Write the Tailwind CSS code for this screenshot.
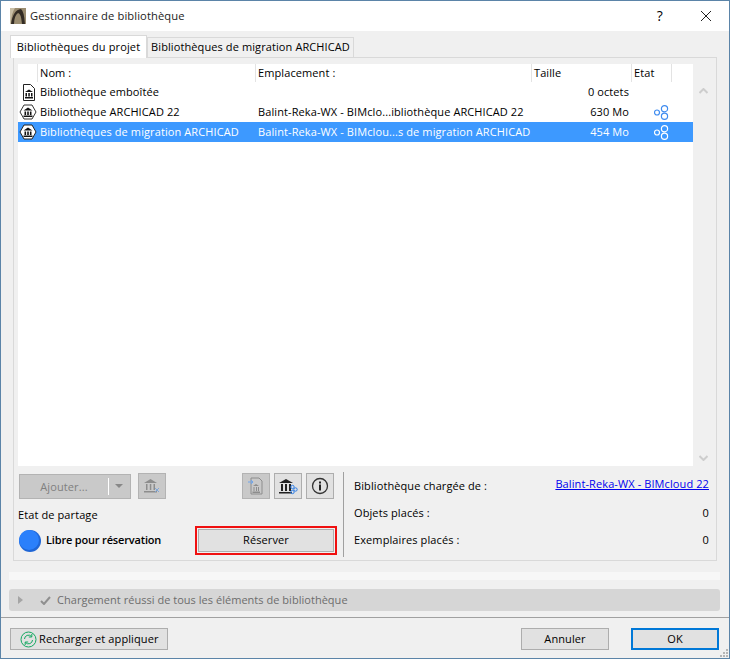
<!DOCTYPE html>
<html lang="fr">
  <head>
    <meta charset="UTF-8" />
    <title>Gestionnaire de bibliothèque</title>
    <script src="https://cdn.jsdelivr.net/npm/@tailwindcss/browser@4"></script>
  </head>
  <body class="m-0">
    <div class="w-[730px] h-[659px] flex flex-col border border-[#5b84a8] bg-[#f0f0f0] font-['Open_Sans',sans-serif] text-[11px] tracking-[.1px] text-black overflow-hidden relative">
      <!-- title bar -->
      <div class="h-[30px] bg-white flex items-center shrink-0 pl-[9px]">
        <svg width="16" height="16" viewBox="0 0 16 16"><rect width="16" height="16" fill="#9a8c70"/><path d="M0 0h5Q1 6 1 16H0z" fill="#c9bfa6"/><path d="M1 16Q3 2 11 1Q14 3 15 16L12 16Q11 5 8 5Q4 8 4 16Z" fill="#332c24"/></svg>
        <span class="ml-[4px] text-[11.2px] text-[#222]">Gestionnaire de bibliothèque</span>
        <span class="ml-auto text-[14px] mr-[38px] -mt-[2px]">?</span>
        <svg class="mr-[18px]" width="10" height="10" viewBox="0 0 10 10"><path d="M0 0l10 10M10 0 0 10" stroke="#222" fill="none"/></svg>
      </div>
      <!-- tabs -->
      <div class="h-[22px] flex items-end shrink-0 pl-[9px] mt-[4px]">
        <div class="h-[23px] w-[137px] bg-white border border-b-0 border-[#d9d9d9] flex items-center justify-center tracking-[.13px] whitespace-nowrap relative -mb-px z-10">Bibliothèques du projet</div>
        <div class="h-[20px] w-[207px] bg-[#f0f0f0] border border-b-0 border-[#d9d9d9] flex items-center justify-center whitespace-nowrap">Bibliothèques de migration ARCHICAD</div>
      </div>
      <!-- panel -->
      <div class="ml-[12px] w-[704px] h-[504px] border border-[#d9d9d9] bg-[#f0f0f0] shrink-0 flex flex-col pt-[6px] pl-[4px]">
        <div class="h-[402px] flex shrink-0">
          <div class="w-[675px] flex flex-col bg-white">
            <div class="h-[18px] flex bg-white w-[673px] leading-[18px]">
              <div class="w-[20px] h-full border-r border-[#e3e3e3]"></div>
              <div class="w-[218px] h-full border-r border-[#e3e3e3] pl-[2px]">Nom :</div>
              <div class="w-[276px] h-full border-r border-[#e3e3e3] pl-[2px]">Emplacement :</div>
              <div class="w-[100px] h-full border-r border-[#e3e3e3] pl-[2px]">Taille</div>
              <div class="w-[40px] h-full border-r border-[#e3e3e3] pl-[2px]">Etat</div>
            </div>
            <div class="h-[20px] flex items-center whitespace-nowrap">
              <div class="w-[22px] pl-[4px]">
                <svg class="block" width="14" height="17" viewBox="0 0 14 17"><path d="M1.500.5h7l4 4v12h-11z" fill="#fff" stroke="#222"/><path d="M3 8 7 5.500 11 8zM3.500 9h1.500v3.500H3.500zM6.300 9h1.500v3.500H6.300zM9 9h1.500v3.500H9zM3 13h8v1.500H3z" fill="#111"/></svg>
              </div>
              <div class="w-[218px]">Bibliothèque emboîtée</div>
              <div class="w-[276px]"></div>
              <div class="w-[95px] text-right">0 octets</div>
            </div>
            <div class="h-[20px] flex items-center whitespace-nowrap">
              <div class="w-[22px] pl-[1px]">
                <svg class="block" width="18" height="16" viewBox="0 0 18 16"><path d="M1 8 5 1h8l4 7-4 7H5z" fill="#fff" stroke="#333"/><path d="M4.500 6.500 9 3.500l4.500 3zM5.500 7.500h1.600v3.500H5.500zM8.200 7.500h1.600v3.500H8.200zM10.900 7.500h1.600v3.500h-1.600zM4.500 11.500h9V13h-9z" fill="#111"/></svg>
              </div>
              <div class="w-[218px]">Bibliothèque ARCHICAD 22</div>
              <div class="w-[276px]">Balint-Reka-WX - BIMclo...ibliothèque ARCHICAD 22</div>
              <div class="w-[95px] text-right">630 Mo</div>
              <div class="w-[60px] pl-[25px]">
                <svg class="block" width="15" height="15" viewBox="0 0 15 15" fill="none" stroke="#3f8cf0" stroke-width="1.200"><circle cx="3" cy="7.500" r="2.500"/><circle cx="10.500" cy="3.700" r="3.100"/><circle cx="10.500" cy="11.200" r="3.100"/></svg>
              </div>
            </div>
            <div class="h-[20px] flex items-center whitespace-nowrap bg-[#3d99ff] text-white">
              <div class="w-[22px] pl-[1px]">
                <svg class="block" width="18" height="16" viewBox="0 0 18 16"><path d="M1 8 5 1h8l4 7-4 7H5z" fill="#fff" stroke="#222"/><path d="M4.500 6.500 9 3.500l4.500 3zM5.500 7.500h1.600v3.500H5.500zM8.200 7.500h1.600v3.500H8.200zM10.900 7.500h1.600v3.500h-1.600zM4.500 11.500h9V13h-9z" fill="#111"/></svg>
              </div>
              <div class="w-[218px]">Bibliothèques de migration ARCHICAD</div>
              <div class="w-[276px]">Balint-Reka-WX - BIMclou...s de migration ARCHICAD</div>
              <div class="w-[95px] text-right">454 Mo</div>
              <div class="w-[60px] pl-[25px]">
                <svg class="block" width="15" height="15" viewBox="0 0 15 15" fill="none" stroke="#fff" stroke-width="1.200"><circle cx="3" cy="7.500" r="2.500"/><circle cx="10.500" cy="3.700" r="3.100"/><circle cx="10.500" cy="11.200" r="3.100"/></svg>
              </div>
            </div>
          </div>
          <div class="w-[20px] flex flex-col justify-between items-center bg-[#f0f0f0] pt-[24px] pb-[5px]">
            <svg width="9" height="6" viewBox="0 0 9 6"><path d="M.5 5 4.500 1l4 4" fill="none" stroke="#cdcdcd" stroke-width="2"/></svg>
            <svg width="9" height="6" viewBox="0 0 9 6"><path d="M.5 1l4 4 4-4" fill="none" stroke="#cdcdcd" stroke-width="2"/></svg>
          </div>
        </div>
        <!-- lower part -->
        <div class="flex flex-1 mt-[6px] mb-[3px]">
          <div class="w-[326px] border-r border-[#a0a0a0] pr-[6px] flex flex-col">
            <div class="flex items-center h-[26px] mt-[1px] ml-[1px] mr-[3px]">
              <div class="w-[112px] h-[25px] bg-[#c9c9c9] border border-[#b3b3b3] flex items-center text-[#808080]">
                <span class="w-[89px] text-center border-r border-white leading-[17px]">Ajouter...</span>
                <svg class="ml-[6px]" width="8" height="4" viewBox="0 0 8 4"><path d="M0 0h8L4 4z" fill="#888"/></svg>
              </div>
              <div class="w-[28px] h-[26px] ml-[7px] bg-[#c9c9c9] border border-[#b3b3b3] flex items-center justify-center">
                <svg width="18" height="16" viewBox="0 0 18 16"><path d="M1 5 7.500 1 14 5zM3 6h1.500v6H3zM6.800 6h1.500v6H6.800zM10.500 6H12v6h-1.500zM1 13h13v1.500H1z" fill="#8d8d8d"/><path d="M12 10l4 4m0-4-4 4" stroke="#7fa6d8"/></svg>
              </div>
              <div class="w-[28px] h-[26px] ml-auto bg-[#c9c9c9] border border-[#b3b3b3] flex items-center justify-center">
                <svg width="16" height="18" viewBox="0 0 16 18" fill="none"><path d="M3 1h8l3 3v13H3z" stroke="#8d8d8d"/><path d="M5 9l3-2 3 2zM5.500 10h1v4h-1zM8 10h1v4H8zM10 10h1v4h-1zM4.500 14.500h7.500V16H4.500z" fill="#8d8d8d"/><path d="M0 5h5M3 3l2 2-2 2" stroke="#6ea5ec"/></svg>
              </div>
              <div class="w-[28px] h-[26px] ml-[4px] bg-[#e1e1e1] border border-[#adadad] flex items-center justify-center">
                <svg width="20" height="17" viewBox="0 0 20 17"><path d="M1 5 8 1l7 4zM3 6h2v7H3zM7 6h2v7H7zM11 6h2v7h-2zM1 14h13v1.500H1z" fill="#222"/><g fill="none" stroke="#2f7fe8"><circle cx="14.500" cy="9" r="1.700"/><circle cx="17.500" cy="11.500" r="1.700"/><circle cx="14.500" cy="14" r="1.700"/></g></svg>
              </div>
              <div class="w-[28px] h-[26px] ml-[4px] bg-[#e1e1e1] border border-[#adadad] flex items-center justify-center">
                <svg width="18" height="18" viewBox="0 0 18 18" fill="none"><circle cx="9" cy="9" r="7.500" stroke="#333" stroke-width="1.300"/><path d="M8 7.500h2v6H8zM8 4.500h2v2H8z" fill="#222"/></svg>
              </div>
            </div>
            <div class="mt-[9px] h-[15px] flex items-center">Etat de partage</div>
            <div class="flex items-center mt-[3px]">
              <svg class="ml-[1px]" width="22" height="22" viewBox="0 0 22 22"><circle cx="11" cy="11" r="11" fill="#1f66d6"/><circle cx="10" cy="10" r="10" fill="#2b80fb"/></svg>
              <div class="ml-[5px] font-semibold tracking-[-.17px] whitespace-nowrap">Libre pour réservation</div>
              <div class="ml-auto border-2 border-[#f01010] p-px">
                <div class="w-[136px] h-[23px] bg-[#e1e1e1] border border-[#adadad] flex items-center justify-center">Réserver</div>
              </div>
            </div>
          </div>
          <div class="flex-1 pl-[10px] pr-[7px]">
            <div class="flex justify-between h-[28px] items-center">
              <span>Bibliothèque chargée de :</span>
              <a class="underline text-[#0000ee] -mt-[4px]">Balint-Reka-WX - BIMcloud 22</a>
            </div>
            <div class="flex justify-between h-[27px] items-center"><span>Objets placés :</span><span>0</span></div>
            <div class="flex justify-between h-[27px] items-center"><span>Exemplaires placés :</span><span>0</span></div>
          </div>
        </div>
      </div>
      <!-- progress strip -->
      <div class="ml-[8px] w-[711px] h-[8px] bg-[#f7f7f7] mt-[11px] shrink-0"></div>
      <!-- status bar -->
      <div class="ml-[8px] w-[711px] h-[22px] bg-[#d6d6d6] rounded-[3px] mt-[9px] shrink-0 flex items-center text-[#6d6d6d] tracking-[.03px]">
        <svg class="ml-[9px]" width="5" height="8" viewBox="0 0 5 8"><path d="M0 0l5 4-5 4z" fill="#a5a5a5"/></svg>
        <svg class="ml-[17px]" width="11" height="9" viewBox="0 0 11 9"><path d="M1 5l3 3 6-7" fill="none" stroke="#8f8f8f" stroke-width="2"/></svg>
        <span class="ml-[6px]">Chargement réussi de tous les éléments de bibliothèque</span>
      </div>
      <!-- footer -->
      <div class="mt-[6px] border-t border-[#a0a0a0] flex-1 flex items-start pt-[10px] pl-[9px] pr-[10px]">
        <div class="w-[158px] h-[22px] shrink-0 bg-[#e1e1e1] border border-[#adadad] flex items-center pl-[9px] tracking-[.1px]">
          <svg class="shrink-0" width="17" height="17" viewBox="0 0 17 17" fill="none" stroke="#12a860"><circle cx="8.500" cy="8.500" r="7.500"/><path d="M4.500 8a4 4 0 0 1 7-2.500M12.500 9a4 4 0 0 1-7 2.500M11.800 3v3h-3M5.200 14v-3h3"/></svg>
          <span class="ml-[2px] whitespace-nowrap">Recharger et appliquer</span>
        </div>
        <div class="ml-auto w-[88px] h-[22px] bg-[#e1e1e1] border border-[#adadad] flex items-center justify-center">Annuler</div>
        <div class="ml-[22px] w-[88px] h-[22px] bg-[#e1e1e1] border-2 border-[#0078d7] flex items-center justify-center">OK</div>
      </div>
      <!-- resize grip -->
      <svg class="absolute right-px bottom-px" width="8" height="8" viewBox="0 0 8 8" fill="#b5b5b5"><path d="M6 0h2v2H6zM3 3h2v2H3zM6 3h2v2H6zM0 6h2v2H0zM3 6h2v2H3zM6 6h2v2H6z"/></svg>
    </div>
  </body>
</html>
